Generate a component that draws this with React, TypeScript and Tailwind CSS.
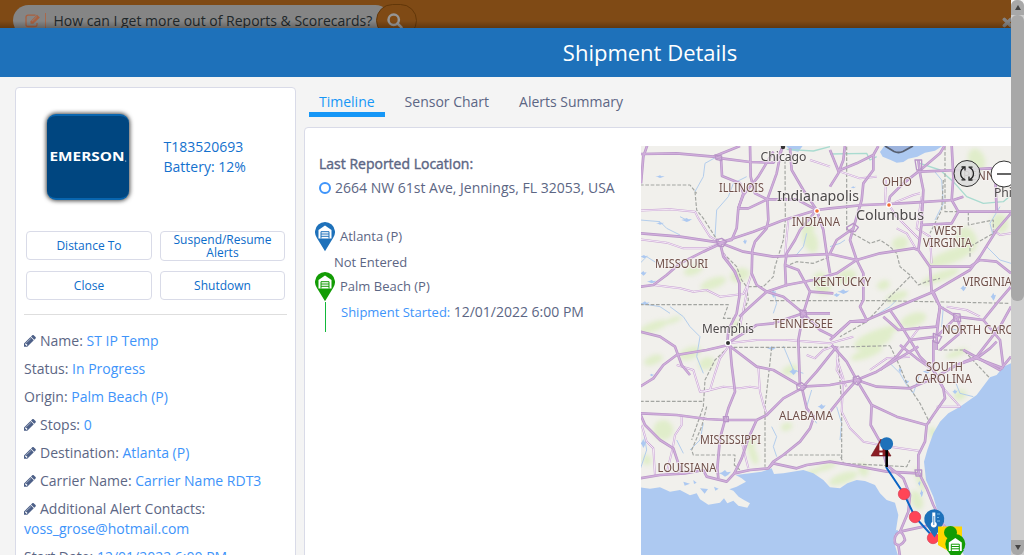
import type { ReactNode } from "react";
import { FaTimes } from "react-icons/fa";

const THIRD = "translate(640 140) scale(0.33333)";

const borders = [
  "M0 135H150L170 160", "M0 494H265L250 535H280", "M435 60L436 240L430 300L405 380L400 410L370 440L320 440L325 480L290 560",
  "M165 155L170 210L190 235L225 290L240 310L250 340L290 380L305 420L320 440",
  "M435 380L470 365L520 370L570 350", "M390 482H720L1110 490", "M265 622H570L750 617",
  "M0 784H190", "M200 800L185 860L155 930L160 945H285L283 975L300 990", "M395 622L375 800L375 980", "M430 945H600L610 970L800 980L810 960",
  "M620 20V270L690 310L720 300L750 320L770 340L780 380L810 405L835 435L860 425L900 415",
  "M915 20V215H1110", "M910 120L905 210L885 250L870 280", "M985 215L985 255L1060 240L1060 280L990 320L990 350",
  "M810 410L740 480L680 545L600 590", "M750 617L780 680L800 730L840 790L870 850", "M895 630H970L1050 715",
  "M595 640L605 800L605 960",
  "M265 622L225 660L195 720L190 800L155 900",
];

const majors = [
  "M0 42L110 40L220 50L245 55L330 66L400 68L425 30", "M3 130L10 50L22 15", "M220 50L300 18", "M243 55L246 108L300 130L310 160",
  "M330 15L332 110L345 160L382 178", "M425 25L410 100L382 178L385 240L380 265L345 305L337 330L335 400L350 435L380 455",
  "M382 178H470L530 210", "M382 178L325 205H295L310 165L355 110L400 35", "M310 160L295 205L290 265L275 300L240 308",
  "M0 280L120 290L240 308L340 275L425 242L530 210", "M240 308L310 335L400 350L570 342L650 360L720 340L820 325L835 330",
  "M240 308L250 350L285 395L298 430L298 470L290 520L265 570L262 610", "M245 310L190 335L120 370L80 405L40 435L0 440",
  "M450 25L455 90L490 150L530 210L480 270L465 300L440 340L435 375L438 440", "M530 210L550 270L560 340L570 400",
  "M530 210L570 205L670 195L745 192L820 188L940 180L970 170", "M435 375L475 390L510 455L490 520", "M510 455L580 460",
  "M380 455L440 435L520 420L590 400L650 360", "M380 455L330 500L298 530", "M380 455L430 470L490 520H570", "M490 520L400 550L350 555L262 610",
  "M490 520L475 600L480 740", "M0 575L60 590L105 620L125 675L150 705", "M490 520L540 570L580 590L630 545H680",
  "M570 140L595 100L610 60L615 15", "M570 30L595 92L650 70L700 45L715 18", "M700 45V90L670 130L665 180L640 265L590 300L570 340",
  "M745 192L750 170L790 130L835 95L900 40L915 15", "M835 60L840 100L850 150L845 250L835 330L870 380L875 455L900 500L890 590L890 630",
  "M640 265L630 300L650 360L670 400V480L660 500L680 540", "M870 380H920L990 380L1020 360L1070 365L1113 400",
  "M1113 220L1070 270L1020 350L990 390L880 455L750 510L680 540L630 545L570 600", "M880 455L900 500L950 530L1030 540L1070 490L1113 440",
  "M935 15L940 110L935 180L955 215L935 250L840 255", "M840 95L960 90L1050 85L1113 95", "M955 215H1113", "M1065 85L1070 215",
  "M750 510L785 560L810 600L840 650L880 690", "M730 530L775 570L890 560L900 500", "M950 530L890 590L810 600L770 650L720 690", "M1030 540L1080 600L1090 680",
  "M950 530L965 575L900 630", "M1113 500L1080 560L1010 650L950 675", "M970 630L1080 690L1113 650",
  "M0 740L40 715L70 675L110 645L200 630L265 615", "M265 615L350 680L400 690L485 740L570 735L650 720L710 740L810 745L880 715",
  "M270 615L275 675L285 755L265 805L255 840L240 895L232 985L235 1015", "M0 820L110 825L200 837L255 840H350L380 825L430 775L485 745L530 695L590 620",
  "M485 740L500 805L522 830L510 865L480 905L430 945L400 965L385 985", "M350 840L325 895L305 955L283 1000",
  "M0 820L15 855L60 900L100 925L125 1000", "M0 1015L60 1005L135 1000L190 990L200 1010L260 1025L283 1000L330 990L385 985L400 970L470 985L500 975L570 965L660 980L740 995L835 1000",
  "M570 815L610 765L650 720L710 695L810 635L835 620", "M575 615L620 665L650 720L695 795L770 830L860 855",
  "M695 795L692 855L720 905L740 975L790 1015L810 1065L805 1115L780 1175", "M780 615L830 655L880 690L910 745L915 775L880 825L860 855L855 905L835 945V995L860 1045L880 1095L910 1155L950 1200",
  "M880 715L950 675L1010 655L1050 625L1070 605", "M880 600V690L910 745", "M1010 655L1090 685",
  "M780 1175Q760 1185 765 1210Q780 1225 795 1200Q790 1180 780 1175L850 1160L900 1150", "M775 1215L780 1250",
];

const minors = [
  "M0 212L90 208L165 215L175 235L210 290L240 308", "M0 298L80 308L130 325H200L235 312", "M40 435L120 445L160 455L200 450L240 470L310 462L325 430L335 400",
  "M325 430L312 500L300 560", "M262 610L350 600L440 600L570 610L640 590", "M445 240L440 290L435 350", "M510 60L570 80",
  "M355 680L360 755L372 800L380 820", "M110 675L160 690L180 755L210 750L225 700L240 655L265 620", "M190 755L250 740L300 745L330 740L360 745",
  "M125 825V855L105 885L98 925L80 1000", "M5 855L20 905L40 925L45 1005", "M305 905L325 985", "M500 645L525 655L550 630L580 620",
  "M590 655L610 715L605 815L630 865L670 905L750 920L840 933", "M745 192L770 230L810 270L840 300", "M845 170L830 265L870 290L875 370",
  "M735 192L738 120", "M600 95L660 115L710 110", "M595 620L590 690L620 740", "M690 690L740 655L810 650", "M890 800L960 800L910 745", "M1113 280L1080 285L1060 270",
  "M830 330L800 280L770 265", "M765 187L820 165L840 160", "M920 500L980 510L1020 530", "M810 600L840 560", "M250 340L280 390L300 430",
];

const rivers = [
  "M165 155L190 110L195 70L240 45", "M225 290L230 210L265 170L280 130L320 110", "M90 500L130 530L150 560L180 590L170 650L190 700",
  "M0 240L60 245L80 265L120 285", "M0 370L20 350L60 375", "M400 450L410 490L400 520", "M0 490L60 500L90 520", "M140 240L120 230",
  "M500 280L490 320L465 350", "M395 860L410 890L400 920L410 950", "M430 618L460 690L490 700", "M515 750L500 800L530 850",
  "M750 670L780 700L800 735L820 760L840 700", "M590 800L605 850L600 900", "M880 90L905 120L910 190L885 240", "M700 530L750 500L770 480",
  "M940 710L960 760L1000 770", "M1080 200L1050 250L1060 290L1030 330", "M1040 320L1080 360L1113 370", "M190 850L180 900L150 930", "M570 320L600 310L615 300", "M910 500L905 560L950 570", "M10 870L20 930L0 990", "M110 900L130 940",
];

const greens: [number, number, number, number][] = [
  [40, 560, 45, 14], [220, 430, 40, 16], [300, 405, 30, 20], [160, 390, 30, 14], [510, 300, 22, 40], [505, 260, 25, 14], [70, 870, 30, 30], [40, 660, 30, 14],
  [150, 640, 35, 18], [330, 910, 14, 22], [340, 945, 12, 30], [450, 690, 25, 14], [440, 860, 18, 12], [700, 600, 60, 25], [680, 640, 50, 14], [820, 540, 40, 20],
  [930, 350, 70, 20], [980, 300, 30, 40], [900, 410, 60, 14], [770, 470, 35, 14], [1010, 60, 25, 35], [780, 310, 25, 20], [620, 410, 30, 20], [545, 430, 25, 35],
  [730, 435, 20, 14], [880, 880, 12, 20], [960, 765, 20, 15], [830, 1080, 18, 30], [610, 1015, 45, 16], [670, 990, 15, 20], [520, 995, 30, 8], [950, 640, 35, 10],
  [20, 960, 14, 16], [200, 670, 25, 18], [290, 560, 14, 20], [560, 980, 30, 10], [1080, 250, 25, 30], [840, 1020, 10, 40], [720, 580, 60, 14], [100, 540, 26, 8],
];

const lakes: [number, number, number, number][] = [
  [12, 350, 12, 5], [10, 400, 10, 7], [35, 425, 14, 5], [140, 240, 16, 6], [60, 250, 12, 4], [15, 490, 14, 6], [400, 460, 8, 14], [315, 305, 6, 8],
  [460, 695, 12, 10], [545, 800, 12, 8], [395, 625, 14, 6], [610, 455, 18, 7], [590, 465, 10, 6], [970, 445, 9, 9], [945, 755, 8, 7], [860, 695, 12, 6],
  [35, 705, 6, 4], [800, 725, 8, 6], [255, 1000, 18, 10], [640, 142, 8, 3], [10, 910, 8, 14], [780, 690, 5, 10], [60, 110, 14, 4], [1060, 470, 8, 12],
  [845, 1060, 5, 12], [838, 1030, 4, 8],
];

type Place = { t: string; x: number; y: number; w: number; city?: boolean; s?: number };
const places: Place[] = [
  { t: "Chicago", x: 760.5, y: 161, w: 46, city: true, s: 12.5 },
  { t: "ILLINOIS", x: 719, y: 192, w: 45 },
  { t: "Indianapolis", x: 777, y: 201, w: 82, city: true, s: 14.5 },
  { t: "INDIANA", x: 792, y: 226, w: 48 },
  { t: "OHIO", x: 882, y: 186, w: 30 },
  { t: "Columbus", x: 856, y: 220, w: 68, city: true, s: 14.5 },
  { t: "WEST", x: 934, y: 235, w: 29 },
  { t: "VIRGINIA", x: 923, y: 247, w: 49 },
  { t: "MISSOURI", x: 655, y: 268, w: 53 },
  { t: "KENTUCKY", x: 813, y: 286, w: 58 },
  { t: "VIRGINIA", x: 963, y: 286, w: 49 },
  { t: "TENNESSEE", x: 773, y: 328, w: 60 },
  { t: "Memphis", x: 702, y: 333, w: 52, city: true, s: 12.5 },
  { t: "NORTH CAROLINA", x: 942, y: 334, w: 98 },
  { t: "SOUTH", x: 926, y: 371, w: 37 },
  { t: "CAROLINA", x: 915, y: 383, w: 57 },
  { t: "ALABAMA", x: 779, y: 420, w: 54 },
  { t: "MISSISSIPPI", x: 700, y: 444, w: 61 },
  { t: "LOUISIANA", x: 657.5, y: 472, w: 59 },
  { t: "Phi", x: 994, y: 196.5, w: 18, city: true, s: 12.5 },
  { t: "PENN", x: 963, y: 180, w: 32 },
];

function PencilIcon() {
  return (
    <svg viewBox="128 160 1536 1536" className="mr-1 inline h-3 w-3 align-[-1px] text-[#4d6088]">
      <path fill="currentColor" d="M491 1536l91-91-235-235-91 91v107h128v128h107zm523-928q0-22-22-22-10 0-17 7l-542 542q-7 7-7 17 0 22 22 22 10 0 17-7l542-542q7-7 7-17zm-54-192l416 416-832 832h-416v-416zm683 96q0 53-37 90l-166 166-416-416 166-165q36-38 90-38 53 0 91 38l235 234q37 39 37 91z" />
    </svg>
  );
}

function EditIcon() {
  return (
    <svg viewBox="0 0 16 14" className="h-[14px] w-4 text-[#a9603f]" fill="none" stroke="currentColor">
      <path d="M10.500 1.200H3A2 2 0 0 0 1 3.200V10.500A2 2 0 0 0 3 12.500H10A2 2 0 0 0 12 10.500V9" strokeWidth="1.300" />
      <path d="M5.500 9.800V7.200L12 .7L14.800 3.500L8.300 9.800Z" fill="currentColor" stroke="none" />
      <path d="M7 7.300L11.800 2.600" stroke="#858585" strokeWidth=".8" />
    </svg>
  );
}

function Warehouse() {
  return (
    <>
      <path d="M-6.500 6.500V-2L0 -6.500L6.500 -2V6.500Z" fill="#fff" />
      <path d="M-4 6.500V-.3H4V6.500M-4 2H4M-4 4.300H4" fill="none" stroke="currentColor" strokeWidth="1" />
    </>
  );
}

function ShipmentMap() {
  return (
    <svg className="block h-[409px] w-[370px] shrink-0" viewBox="641 146 370 409" fontFamily="'Noto Sans', 'Open Sans', sans-serif">
      <defs>
        <filter id="soft"><feGaussianBlur stdDeviation="7" /></filter>
      </defs>
      <rect x="641" y="146" width="370" height="409" fill="#f1f0ec" />
      <g transform={THIRD} fill="none" strokeLinejoin="round">
        <g fill="#e0edca" filter="url(#soft)">
          {greens.map(([x, y, rx, ry], i) => <ellipse key={i} cx={x} cy={y} rx={rx} ry={ry} transform={`rotate(-20 ${x} ${y})`} />)}
        </g>
        <g fill="#adc9f1">
          <path d="M435 15L450 30L475 35L490 15Z" />
          <path d="M735 15L720 36L728 50L752 60L770 68L790 66L805 56L832 50L855 38L885 32L912 15Z" />
          <path d="M0 1042L30 1046L60 1042L90 1055L120 1050L150 1066L170 1060L180 1078L205 1094L240 1088L252 1075L262 1090L280 1082L295 1097L322 1103L330 1090L312 1080L296 1070L280 1052L268 1048L290 1040L318 1025L305 1015L287 1005L330 1000L365 995L395 985L402 1002L430 1000L490 990L520 1000L550 1020L570 1042L600 1045L622 1030L650 1020L675 1023L705 1035L720 1060L740 1080L765 1088L775 1125L768 1170L760 1200L775 1250H0Z" />
          <path d="M1113 670L1090 680L1070 705L1050 712L1010 765L960 800L925 820L900 845L880 880L862 930L852 965L858 1020L880 1070L890 1105L920 1165L945 1200L975 1250H1113Z" />
          {lakes.map(([x, y, rx, ry], i) => <path key={i} d={`M${x - rx} ${y}L${x - rx / 2} ${y - ry / 3}L${x} ${y - ry}L${x + rx / 3} ${y - ry / 3}L${x + rx} ${y - ry / 2}L${x + rx / 2} ${y + ry / 2}L${x} ${y + ry}L${x - rx / 2} ${y + ry / 3}Z`} />)}
        </g>
        <g fill="#f1f0ec">
          <path d="M150 1035l18 5l-10 8zM205 1062l14 3l-6 9zM235 1070l8 6l-12 3zM270 1065l20 8l-14 5z" />
        </g>
        <g fill="#adc9f1"><path d="M130 1025l20 6l-16 6zM180 1045l24 2l-10 14zM160 1020l10 8l-8 4zM222 1040l14 6l-10 6zM760 1175l12 -6l5 10l-10 8z" /></g>
        {rivers.map((d, i) => <path key={i} d={d} stroke="#b3cdec" strokeWidth="3" />)}
        <path d="M570 42L680 40L690 60L710 50M840 70L900 90L940 125L980 170L1030 190L1090 185L1113 165M440 28L520 33L570 20" stroke="#a9dbd0" strokeWidth="4" />
        {borders.map((d, i) => <path key={i} d={d} stroke="#a3a5a1" strokeWidth="3.500" strokeDasharray="11 5" />)}
        {minors.map((d, i) => <path key={i} d={d} stroke="#c9a3d4" strokeWidth="6" />)}
        {minors.map((d, i) => <path key={i} d={d} stroke="#faf3fb" strokeWidth="2.600" />)}
        {majors.map((d, i) => <path key={i} d={d} stroke="#b895c7" strokeWidth="8" />)}
        {majors.map((d, i) => <path key={i} d={d} stroke="#d0aedb" strokeWidth="4" />)}
        <g stroke="#b895c7" strokeWidth="4">
          <path d="M228 300L245 295L260 305L250 320L235 318ZM620 262L640 250L655 262L645 275L625 272ZM470 735L485 728L500 740L488 752L472 748ZM640 712L655 708L665 722L652 735L640 728ZM825 60H845V90H830Z" />
          <path d="M825 990H845V1008H828ZM480 510L498 512L500 530L482 532ZM940 520L960 522L962 545L942 543ZM250 830H265V845H252ZM880 580L905 590L895 610L880 605ZM225 45L245 48V62L228 58Z" />
        </g>
      </g>
      {places.map((p, i) => (
        <text key={i} x={p.x} y={p.y} textLength={p.w} lengthAdjust="spacingAndGlyphs" fontSize={p.s ?? 12} fill={p.city ? "#4c4a4a" : "#6f5049"} stroke="#f7f3f1" strokeOpacity=".75" strokeWidth="2" paintOrder="stroke">{p.t}</text>
      ))}
      <circle cx="783" cy="147" r="2.200" fill="#333" />
      <circle cx="728" cy="343" r="3.200" fill="#fff" /><circle cx="728" cy="343" r="2" fill="#333" />
      <circle cx="817" cy="211" r="3" fill="#fff" /><circle cx="817" cy="211" r="1.800" fill="#f26b32" />
      <circle cx="889" cy="205" r="3" fill="#fff" /><circle cx="889" cy="205" r="1.800" fill="#f26b32" />
      <path d="M885 146L894 151.500Q898.500 153.500 903 151.500L913 146" fill="#9db4dd" stroke="#575f70" strokeWidth="1.800" />
      <circle cx="967" cy="173.500" r="13" fill="#dcdcdc" fillOpacity=".9" stroke="#333" strokeWidth="1" />
      <g fill="none" stroke="#222" strokeWidth="1.300">
        <path d="M964.800 179.500C959.300 177 959.300 170 964.500 167.300M969.300 167.300C974.800 170 974.800 177 969.600 179.700" />
        <path d="M961.500 167H965V170.500M965.500 179.800H961.500M972.500 180H969V176.500M968.500 167.200H972.500" />
      </g>
      <circle cx="1004" cy="174" r="13" fill="#fff" stroke="#333" strokeWidth="1" />
      <path d="M997 174H1011" stroke="#333" strokeWidth="1.500" />
      <path d="M886 467L904 494L915 517L934 538" fill="none" stroke="#0b64c4" strokeWidth="2" />
      <path d="M881 439L891 456H871Z" fill="#8b1d24" stroke="#6d1218" strokeWidth=".6" />
      <path d="M881 443.500V450.500M881 452.500V455" stroke="#fff" strokeWidth="3.200" />
      <path d="M886.700 449V467" stroke="#000" strokeWidth="2.600" />
      <circle cx="886.600" cy="443.700" r="6.500" fill="#1e71ba" />
      <g fill="#ff4557" stroke="#d63b55" strokeWidth=".7"><circle cx="904" cy="494" r="5.700" /><circle cx="915" cy="517" r="5.700" /><circle cx="933" cy="538" r="5.700" /></g>
      <path d="M934.500 537.500L926 525A10 10 0 1 1 942.500 525Z" fill="#1e71ba" />
      <path d="M932.300 512.500H935.300V522A3 3 0 1 1 932.300 522Z" fill="#fff" />
      <path d="M933.800 516V525" stroke="#1e71ba" strokeWidth=".8" />
      <path d="M937 514H940M937 517.500H939M937 521H940" stroke="#72b4e5" strokeWidth="1" />
      <path d="M938 526.500H962V547L955 555L938 545Z" fill="#ffd500" />
      <circle cx="950.500" cy="532.500" r="6.500" fill="#139c05" />
      <circle cx="955.300" cy="544" r="10" fill="#139c05" /><path d="M947 550L955.500 562L964 550Z" fill="#139c05" />
      <g transform="translate(955.300 544.500)" color="#139c05"><Warehouse /></g>
    </svg>
  );
}

function Pin({ tone }: { tone: string }) {
  return (
    <svg viewBox="-10 -10 20 30" className={`block h-[30px] w-5 shrink-0 ${tone}`}>
      <path d="M0 19.300L-8.200 5.800A10 10 0 1 1 8.200 5.800Z" fill="currentColor" />
      <Warehouse />
    </svg>
  );
}

function ActionButton({ children, tall = false }: { children: ReactNode; tall?: boolean }) {
  return (
    <button className={`${tall ? "h-[30px] w-[125px]" : "h-[29px] w-full"} rounded border border-[#d9dbe8] bg-white px-2 text-[12px] leading-[13px] text-[#0c6cca]`}>{children}</button>
  );
}

function Field({ label, value, editable = false }: { label: string; value: string; editable?: boolean }) {
  return (
    <div className="mb-2 leading-5">
      {editable && <PencilIcon />}
      <span>{label}: </span><span className="text-[#3e94fa]">{value}</span>
    </div>
  );
}

export default function App() {
  return (
    <div className="flex h-[555px] w-[1024px] overflow-hidden bg-[#f4f4f4] text-[14px] text-[#5c6684] [font-family:'Open_Sans',sans-serif]">
      <div className="flex w-[1011px] shrink-0 flex-col overflow-hidden">
        <div className="relative flex h-7 shrink-0 overflow-hidden bg-[#7f4a15] pl-[13px] pt-[5px]">
          <div className="flex h-[31px] w-[378px] shrink-0 items-center rounded-[16px] bg-[#858585] pl-3 text-[#20272a]">
            <EditIcon />
            <span className="ml-[3.5px] h-4 w-px bg-[#a9694b]" />
            <span className="ml-2 whitespace-nowrap">How can I get more out of Reports &amp; Scorecards?</span>
          </div>
          <div className="-ml-[15px] -mt-px flex h-[33px] w-[41px] shrink-0 items-center justify-center rounded-full border border-[#623709] bg-[#7f4a15] pr-[3px]">
            <svg viewBox="0 0 16 16" className="h-4 w-4 text-[#969696]" fill="none" stroke="currentColor" strokeWidth="2.500"><circle cx="6.700" cy="6.700" r="5.200" /><path d="M10.500 10.500L14.500 14.500" strokeLinecap="round" /></svg>
          </div>
          <FaTimes className="absolute right-[-3px] top-[16px] h-[13px] w-[13px] text-[#858585]" stroke="#858585" strokeWidth="40" />
          <div className="absolute bottom-0 left-0 h-[7px] w-full bg-linear-to-b from-transparent to-black/25" />
        </div>
        <header className="flex h-[49px] w-[1300px] shrink-0 items-center justify-center bg-[#1e71ba] text-[22px] text-white">
          <h1 className="pb-px">Shipment Details</h1>
        </header>
        <div className="flex min-h-0 flex-1 pl-[15px]">
          <aside className="mt-[10px] h-[500px] w-[281px] shrink-0 rounded border border-[#d9dbe8] bg-white px-2">
            <div className="flex h-[143px] items-start">
              <div className="ml-[23px] mt-[26px] flex h-[86px] w-[82px] shrink-0 items-center justify-center rounded-[9px] border-y-2 border-[#0865af] bg-[#004680] shadow-[0_0_4px_1px_rgba(0,0,0,0.7)]">
                <svg viewBox="0 0 80 16" className="h-4 w-20 shrink-0"><text x="1.500" y="12.300" textLength="75" lengthAdjust="spacingAndGlyphs" fontSize="12.500" fontWeight="700" fill="#fff" fontFamily="Open Sans, sans-serif">EMERSON</text><circle cx="77.700" cy="12" r=".6" fill="#fff" /></svg>
              </div>
              <div className="ml-[34.5px] mt-[49px] leading-5 text-[#1471ce]"><p>T183520693</p><p>Battery: 12%</p></div>
            </div>
            <div className="grid grid-cols-[126px_125px] gap-x-2 gap-y-[10px] pl-[2px]">
              <ActionButton>Distance To</ActionButton>
              <ActionButton tall>Suspend/Resume Alerts</ActionButton>
              <ActionButton>Close</ActionButton>
              <ActionButton>Shutdown</ActionButton>
            </div>
            <div className="mb-4 mt-[14px] h-px bg-[#dedede]" />
            <Field label="Name" value="ST IP Temp" editable />
            <Field label="Status" value="In Progress" />
            <Field label="Origin" value="Palm Beach (P)" />
            <Field label="Stops" value="0" editable />
            <Field label="Destination" value="Atlanta (P)" editable />
            <Field label="Carrier Name" value="Carrier Name RDT3" editable />
            <Field label="Additional Alert Contacts" value="voss_grose@hotmail.com" editable />
            <Field label="Start Date" value="12/01/2022 6:00 PM" />
          </aside>
          <main className="ml-2 flex min-w-0 flex-1 flex-col">
            <nav className="flex h-[50px] shrink-0 gap-[10px] pl-[5px] pt-[15px] leading-5">
              <a className="h-[25px] border-b-[5px] border-[#1697f7] px-[10px] text-[#1697f7]">Timeline</a>
              <a className="px-[10px]">Sensor Chart</a>
              <a className="px-[10px]">Alerts Summary</a>
            </nav>
            <section className="flex h-[500px] w-[900px] shrink-0 rounded border border-[#d9dbe8] bg-white pt-[18px]">
              <div className="w-[336px] shrink-0 pl-[14px] pt-2">
                <h2 className="leading-5 font-normal [-webkit-text-stroke:0.4px_currentColor]">Last Reported Location:</h2>
                <div className="mt-[3px] flex h-5 items-center whitespace-nowrap"><span className="mr-1 mt-px h-3 w-3 rounded-full border-2 border-[#3e94fa]" />2664 NW 61st Ave, Jennings, FL 32053, USA</div>
                <div className="-ml-1 mt-[25px] text-[13px]">
                  <div className="flex h-[30px]"><Pin tone="text-[#1e71ba]" /><span className="ml-[5px] mt-1 leading-5">Atlanta (P)</span></div>
                  <div className="ml-[19px] h-5 leading-5">Not Entered</div>
                  <div className="flex h-[30px]"><Pin tone="text-[#139c05]" /><span className="ml-[5px] mt-1 leading-5">Palm Beach (P)</span></div>
                  <div className="ml-[10px] h-[30px] border-l border-[#12b83a] pl-[15px] leading-5"><span className="text-[#3e94fa]">Shipment Started:</span> <span className="text-[14px]">12/01/2022 6:00 PM</span></div>
                </div>
              </div>
              <ShipmentMap />
            </section>
          </main>
        </div>
      </div>
      <div className="flex w-[13px] shrink-0 flex-col items-center justify-between rounded-t-md bg-[#cdcdcd]">
        <div className="flex w-full flex-col">
          <div className="flex h-[15px] items-center justify-center rounded-t-md bg-[#a8a8a8]"><svg viewBox="0 0 6 5" className="h-[5px] w-[6px]"><path d="M3 0L6 5H0Z" fill="#444" /></svg></div>
          <div className="h-[286px] rounded-[6px] bg-[#a8a8a8]" />
        </div>
        <div className="flex h-[15px] w-full items-center justify-center rounded-b-md bg-[#a8a8a8]"><svg viewBox="0 0 6 5" className="h-[5px] w-[6px]"><path d="M3 5L6 0H0Z" fill="#444" /></svg></div>
      </div>
    </div>
  );
}
